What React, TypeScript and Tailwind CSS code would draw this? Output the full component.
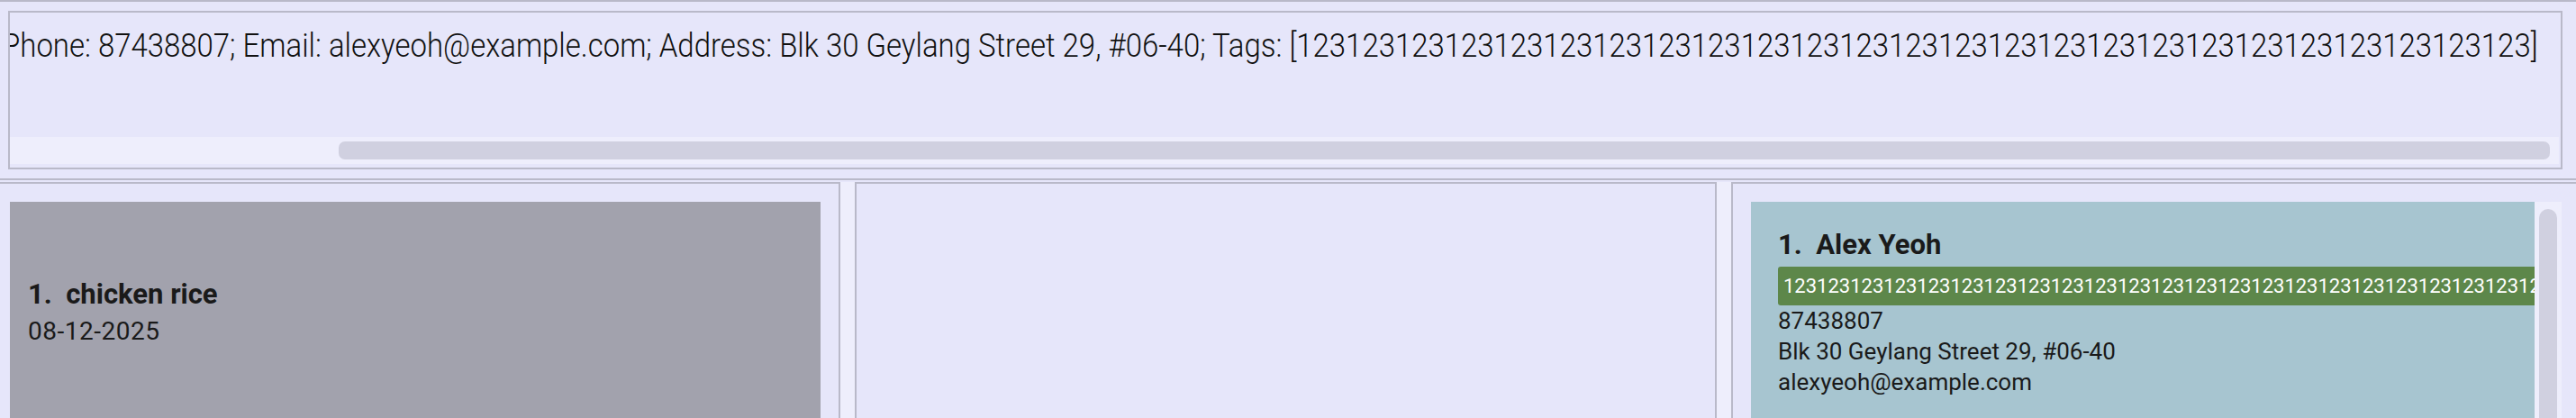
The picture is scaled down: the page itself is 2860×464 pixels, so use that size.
import React from "react";

const TAG = "123".repeat(25);

export default function App() {
  return (
    <div className="w-[2860px] h-[464px] bg-[#e6e6fa] overflow-hidden flex flex-col font-['Roboto',sans-serif] text-[#1a1a1a]">
      {/* Result display */}
      <div className="h-[200px] shrink-0 border-t-2 border-b-2 border-[#b9b9c9] pt-[10px] pl-[9px] pr-[15px]">
        <div className="h-[176px] border-2 border-[#b9b9c9] flex flex-col overflow-hidden">
          <div className="h-[138px] overflow-hidden pt-[19px]">
            <div className="ml-[-9px] w-max origin-left scale-x-[0.915] whitespace-nowrap text-[36px] leading-[36px] font-light text-[#111]">
              {`Phone: 87438807; Email: alexyeoh@example.com; Address: Blk 30 Geylang Street 29, #06-40; Tags: [${TAG}]`}
            </div>
          </div>
          <div className="h-[30px] bg-[#eeeefc] mr-[2px] flex items-center pl-[365px] pr-[10px]">
            <div className="h-[20px] flex-1 rounded-[7px] bg-[#d0d0e0]" />
          </div>
        </div>
      </div>

      {/* Lists */}
      <div className="flex-1 flex pt-[2px] min-h-0">
        {/* Left list */}
        <div className="w-[933px] shrink-0 border-t-2 border-r-2 border-[#b9b9c9] pt-[20px] pl-[11px] pr-[20px] overflow-hidden">
          <div className="h-[400px] bg-[#a2a2ad] pl-[20px] pt-[87px]">
            <div className="text-[31px] leading-[31px] font-bold whitespace-nowrap">1.&nbsp;&nbsp;chicken rice</div>
            <div className="mt-[12px] text-[28px] leading-[28px] tracking-[0.5px]">08-12-2025</div>
          </div>
        </div>
        <div className="w-[16px] shrink-0 bg-[#eeeefc]" />
        {/* Middle */}
        <div className="w-[957px] shrink-0 border-t-2 border-l-2 border-r-2 border-[#b9b9c9]" />
        <div className="w-[16px] shrink-0 bg-[#eeeefc]" />
        {/* Right list */}
        <div className="flex-1 border-t-2 border-l-2 border-[#b9b9c9] pt-[20px] pl-[20px] pr-[16px] flex overflow-hidden">
          <div className="w-[870px] shrink-0 h-[400px] bg-[#a7c5d0] pl-[30px] pt-[32px] overflow-hidden">
            <div className="text-[31px] leading-[31px] font-bold whitespace-nowrap">1.&nbsp;&nbsp;Alex Yeoh</div>
            <div className="mt-[9px] h-[43px] rounded-[3px] bg-[#5d874a] text-white text-[22px] leading-[22px] flex items-center pl-[6px] whitespace-nowrap w-[1200px]">
              {TAG}
            </div>
            <div className="text-[26px] leading-[34px]">
              <div>87438807</div>
              <div>Blk 30 Geylang Street 29, #06-40</div>
              <div>alexyeoh@example.com</div>
            </div>
          </div>
          <div className="w-[30px] shrink-0 h-[400px] bg-[#eeeefc] pt-[8px] flex justify-center">
            <div className="w-[20px] h-[300px] rounded-full bg-[#d0d0e0]" />
          </div>
        </div>
      </div>
    </div>
  );
}
